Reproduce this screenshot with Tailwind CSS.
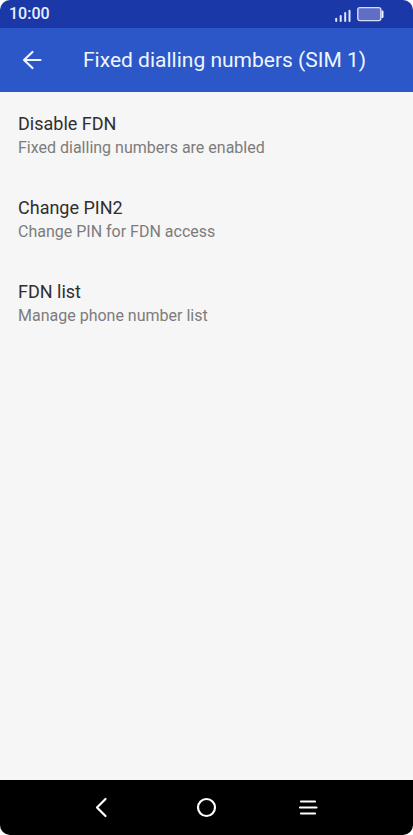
<!DOCTYPE html>
<html lang="en">
<head>
<meta charset="utf-8">
<meta name="viewport" content="width=device-width, initial-scale=1">
<title>Fixed dialling numbers (SIM 1)</title>
<script src="https://cdn.jsdelivr.net/npm/@tailwindcss/browser@4"></script>
</head>
<body class="bg-white font-[Roboto,sans-serif]">
<div class="flex min-h-screen flex-col overflow-hidden rounded-[10px] bg-[#f6f6f6]">
  <div class="flex h-7 items-center justify-between bg-[#1b38a8] pl-[9px] pr-7 text-white">
    <span class="text-base leading-7 font-medium text-[#e9efff]">10:00</span>
    <div class="flex items-center gap-[6px]">
      <svg class="h-4 w-4" viewBox="0 0 16 16" fill="none" stroke="#dfe6ff" stroke-width="2" stroke-linecap="round" aria-hidden="true">
        <path d="M1.2 15v-2.2M5.7 15v-5M10.2 15V7M14.5 15V4.700"/>
      </svg>
      <svg class="h-4 w-7" viewBox="0 0 28 16" aria-hidden="true">
        <rect x=".8" y="1.600" width="23" height="13" rx="2" fill="#606fc4" stroke="#d5ddff" stroke-width="1.400"/>
        <path d="M24.500 4.500h1a1 1 0 0 1 1 1v5.500a1 1 0 0 1-1 1h-1z" fill="#eef2ff"/>
      </svg>
    </div>
  </div>
  <header class="flex h-16 items-center gap-10 bg-[#2b57c8] pl-[19px] text-white">
    <button type="button" aria-label="Back" class="h-6 w-6">
      <svg class="h-6 w-6" viewBox="0 0 24 24" fill="none" stroke="#eff5ff" stroke-width="2.200" stroke-linecap="round" stroke-linejoin="round" aria-hidden="true">
        <path d="M13.500 4 5 12l8.500 8M5 12h16.500"/>
      </svg>
    </button>
    <h1 class="text-[21px] leading-7 text-[#eff5ff]">Fixed dialling numbers (SIM 1)</h1>
  </header>
  <main class="flex-1 pt-5">
    <ul class="flex flex-col gap-9">
      <li><a href="#disable" class="block px-[18px]"><span class="block text-lg leading-6 text-[#2f2f2f]">Disable FDN</span><span class="block text-base leading-6 text-[#7c7c7c]">Fixed dialling numbers are enabled</span></a></li>
      <li><a href="#pin2" class="block px-[18px]"><span class="block text-lg leading-6 text-[#2f2f2f]">Change PIN2</span><span class="block text-base leading-6 text-[#7c7c7c]">Change PIN for FDN access</span></a></li>
      <li><a href="#list" class="block px-[18px]"><span class="block text-lg leading-6 text-[#2f2f2f]">FDN list</span><span class="block text-base leading-6 text-[#7c7c7c]">Manage phone number list</span></a></li>
    </ul>
  </main>
  <nav class="grid h-[55px] grid-cols-3 items-center bg-black pr-[53px] pl-[51px]">
    <button type="button" aria-label="Back" class="flex justify-center">
      <svg class="h-6 w-6" viewBox="0 0 24 24" fill="none" stroke="#fff" stroke-width="2.200" stroke-linecap="round" stroke-linejoin="round" aria-hidden="true"><path d="M14.500 3 6 11.500l8.500 8.500"/></svg>
    </button>
    <button type="button" aria-label="Home" class="flex justify-center">
      <svg class="h-6 w-6" viewBox="0 0 24 24" fill="none" stroke="#fff" stroke-width="2.200" aria-hidden="true"><circle cx="12.500" cy="11.500" r="8.500"/></svg>
    </button>
    <button type="button" aria-label="Menu" class="flex justify-center">
      <svg class="h-6 w-6" viewBox="0 0 24 24" fill="none" stroke="#fff" stroke-width="2.200" stroke-linecap="round" aria-hidden="true"><path d="M4 5.500h14M3 11.500h16.500M4 17.500h14"/></svg>
    </button>
  </nav>
</div>
</body>
</html>
